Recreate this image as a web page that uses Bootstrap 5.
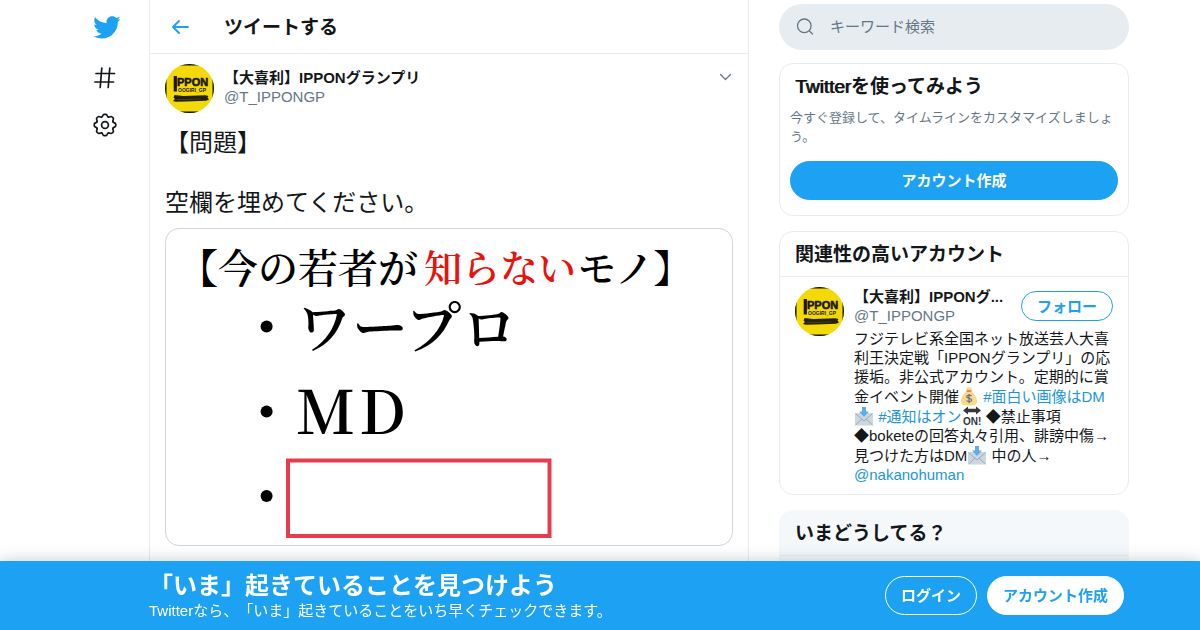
<!DOCTYPE html>
<html lang="ja">
<head>
<meta charset="utf-8">
<meta name="viewport" content="width=device-width, initial-scale=1">
<title>ツイートする</title>
<link rel="stylesheet" href="https://cdn.jsdelivr.net/npm/bootstrap@5.3.0/dist/css/bootstrap.min.css">
<style>
:root { --tw-blue: #1da1f2; --tw-link: #1b95e0; --tw-grey: #657786; --tw-line: #e6ecf0; }
body { font-family: "Liberation Sans", "Noto Sans CJK JP", sans-serif; font-size: 15px; line-height: 19px; color: #14171a; background: #fff; text-spacing-trim: space-all; font-feature-settings: "chws" 0; }
.shell { max-width: 1058px; }
.side-nav { width: 78px; padding-left: 10px; }
.side-nav a { width: 48px; height: 47px; color: #14171a; }
.side-nav a:first-child { height: 54px; padding-left: 2px; color: var(--tw-blue); }
.feed { max-width: 600px; border: solid var(--tw-line); border-width: 0 1px; }
.feed-top { height: 54px; padding: 0 20px; border-bottom: 1px solid var(--tw-line); }
.feed-top h1 { font-size: 19px; line-height: 24px; margin-left: 32px; padding-top: 2px; }
.feed-top a { color: var(--tw-blue); width: 22px; }
.tweet { padding: 10px 15px 15px; }
.avatar { width: 49px; height: 49px; flex: none; border-radius: 50%; margin-right: 10px; }
.handle { color: var(--tw-grey); }
.who { padding-top: 4px; }
.tweet-text { font-size: 24px; line-height: 30px; margin: 15px 0 10px; }
.photo { border: 1px solid #ccd6dd; border-radius: 14px; overflow: hidden; }
.aside { width: 350px; margin-left: 30px; padding-top: 4px; flex: none; }
.search { background: #e6ecf0; height: 46px; padding: 0 15px; color: var(--tw-grey); margin-bottom: 13px; }
.search input { background: none; border: 0; outline: 0; padding: 0 0 2px; margin-left: 14px; color: inherit; }
.search input::placeholder { color: var(--tw-grey); opacity: 1; }
.panel { border: 1px solid var(--tw-line); border-radius: 14px; margin-bottom: 15px; }
.panel h2 { font-size: 19px; line-height: 24px; margin: 0; padding: 11px 15px 9px; }
.thin-latin { font-weight: 400; text-shadow: 1px 0 currentColor; }
.signup { padding: 0 10px 15px; }
.hint { font-size: 13px; color: var(--tw-grey); margin-bottom: 15px; }
.pill { border-radius: 99px; font-size: 15px; font-weight: 700; line-height: 19px; height: 39px; padding: 0 15px; border: 1px solid var(--tw-blue); }
.pill-fill { background: var(--tw-blue); color: #fff; }
.pill-line { background: #fff; color: var(--tw-blue); height: 30px; }
.pill-ghost { background: transparent; color: #fff; border-color: #fff; margin-right: 10px; }
.pill-white { background: #fff; color: var(--tw-blue); border-color: #fff; }
.account { border-top: 1px solid var(--tw-line); padding: 10px 15px; }
.account-text { min-width: 0; }
.bio { margin-top: 4px; }
.bio a { color: var(--tw-link); }
.emoji { width: 18px; height: 20px; margin: 0 1px; vertical-align: -4px; }
.trend { background: #f5f8fa; border-color: #f5f8fa; }
.trend div { border-top: 1px solid var(--tw-line); height: 30px; }
.promo { background: var(--tw-blue); color: #fff; box-shadow: 0 0 15px rgba(20,50,70,.25); }
.promo .shell { padding: 10px 5px 10px 78px; }
.promo strong { font-size: 24px; line-height: 30px; }
</style>
</head>
<body>
<svg class="d-none" aria-hidden="true">
  <defs>
    <symbol id="ippon" viewBox="0 0 49 49">
        <rect width="49" height="49" fill="#f4d908"/>
        <path d="M0 14h1.500v20H0zM49 14h-1.500v20H49zM15 0h19v1.400H15zM15 49h19v-1.400H15z" fill="#111"/>
        <rect x="8.700" y="12" width="3.200" height="15.500" fill="#1a1705"/>
        <text x="12" y="22" font-family="Liberation Sans, sans-serif" font-weight="700" font-size="11" fill="#1a1705" stroke="#1a1705" stroke-width=".6">PPON</text>
        <text x="13" y="27.500" font-family="Liberation Sans, sans-serif" font-weight="700" font-size="5" fill="#1a1705">OOGIRI_GP</text>
        <path d="M9.500 31l9 1 22-.8 3 .8-1 1.500 1.500 2-3 1.200-20 .7-10 .3-3-.8 2-2.200-1.500-1z" fill="#242010"/>
        <path d="M12 35.500h8l16-.6" stroke="#6b600c" stroke-width=".5" fill="none"/>
    </symbol>
    <path id="tooth" d="M-3.300-7.950C-1.900-8.400-2.300-10.700-1-10.700H1C2.300-10.700 1.900-8.400 3.300-7.950"/>
    <symbol id="inbox" viewBox="0 0 18 20">
      <rect y="7" width="18" height="12.500" rx="1.500" fill="#ccd6dd"/>
      <path d="M.5 19l6.500-6M17.500 19L11 13M.5 7.500L9 15l8.500-7.500" fill="none" stroke="#99aab5" stroke-width="1"/>
      <path d="M7 1h4v4.500h3L9 11 4 5.500h3z" fill="#5dadec"/>
    </symbol>
  </defs>
</svg>

<div class="shell mx-auto d-flex min-vh-100">
  <nav class="side-nav flex-shrink-0">
    <a href="#" class="d-flex align-items-center justify-content-center" aria-label="Twitter">
      <svg width="29" height="29" viewBox="0 0 24 24" fill="currentColor"><path d="M23.643 4.937c-.835.37-1.732.62-2.675.733.962-.576 1.700-1.490 2.048-2.578-.9.534-1.897.922-2.958 1.130-.85-.904-2.060-1.470-3.400-1.470-2.572 0-4.658 2.086-4.658 4.660 0 .364.042.718.12 1.060-3.873-.195-7.304-2.050-9.602-4.868-.4.690-.63 1.490-.63 2.342 0 1.616.823 3.043 2.072 3.878-.764-.025-1.482-.234-2.110-.583v.06c0 2.257 1.605 4.140 3.737 4.568-.392.106-.803.162-1.227.162-.3 0-.593-.028-.877-.082.593 1.850 2.313 3.198 4.352 3.234-1.595 1.250-3.604 1.995-5.786 1.995-.376 0-.747-.022-1.112-.065 2.062 1.323 4.510 2.093 7.140 2.093 8.570 0 13.255-7.098 13.255-13.254 0-.2-.005-.402-.014-.602.910-.658 1.700-1.477 2.323-2.410z"/></svg>
    </a>
    <a href="#" class="d-flex align-items-center justify-content-center" aria-label="話題を検索">
      <svg width="24" height="24" viewBox="0 0 24 24" fill="none" stroke="currentColor" stroke-width="1.700" stroke-linecap="round"><path d="M3 7.500h18.500M2 16h18.500M8.800 2L7.200 21.500M16.800 2l-1.600 19.500"/></svg>
    </a>
    <a href="#" class="d-flex align-items-center justify-content-center" aria-label="設定">
      <svg width="24" height="24" viewBox="-12 -12 24 24" fill="none" stroke="currentColor" stroke-width="1.700" stroke-linecap="round"><circle r="3.400"/><use href="#tooth"/><use href="#tooth" transform="rotate(45)"/><use href="#tooth" transform="rotate(90)"/><use href="#tooth" transform="rotate(135)"/><use href="#tooth" transform="rotate(180)"/><use href="#tooth" transform="rotate(225)"/><use href="#tooth" transform="rotate(270)"/><use href="#tooth" transform="rotate(315)"/></svg>
    </a>
  </nav>

  <main class="feed flex-grow-1">
    <header class="feed-top d-flex align-items-center">
      <a href="#" class="d-flex" aria-label="戻る"><svg width="22" height="22" viewBox="0 0 22 22" fill="none" stroke="currentColor" stroke-width="1.900" stroke-linecap="round" stroke-linejoin="round"><path d="M18 11H3.500M9 5l-6 6 6 6"/></svg></a>
      <h1 class="fw-bold mb-0">ツイートする</h1>
    </header>
    <article class="tweet">
      <div class="d-flex">
        <svg class="avatar"><use href="#ippon"/></svg>
        <div class="who flex-grow-1">
          <div class="fw-bold">【大喜利】IPPONグランプリ</div>
          <div class="handle">@T_IPPONGP</div>
        </div>
        <button class="btn p-0 border-0 align-self-start mt-1" aria-label="その他"><svg class="d-block" width="15" height="18" viewBox="0 0 15 18" fill="none" stroke="#657786" stroke-width="1.300" stroke-linecap="round" stroke-linejoin="round"><path d="M2.500 6.500l5 5 5-5"/></svg></button>
      </div>
      <p class="tweet-text">【問題】<br><br>空欄を埋めてください。</p>
      <div class="photo">
        <svg class="d-block w-100" viewBox="0 0 566 316" font-family="'Noto Serif CJK JP', 'Liberation Serif', 'Noto Sans CJK JP', serif" font-size="40" font-weight="600">
          <text x="12" y="54">【今の若者が</text>
          <text x="258" y="53" font-size="38" fill="#e8120f">知らない</text>
          <text x="412" y="53" font-size="38">モノ】</text>
          <text x="130" y="119" font-size="56">ワープロ</text>
          <g font-size="60"><text x="130" y="205">M</text><text x="193" y="205">D</text></g>
          <circle cx="100.600" cy="97.500" r="6"/><circle cx="100.600" cy="182.500" r="6"/><circle cx="100.600" cy="267" r="6"/>
          <rect x="122" y="231.500" width="261.500" height="75.500" fill="none" stroke="#e63c50" stroke-width="4"/>
        </svg>
      </div>
    </article>
  </main>

  <aside class="aside">
    <form class="search rounded-pill d-flex align-items-center">
      <svg width="22" height="22" viewBox="0 0 22 22" fill="none" stroke="currentColor" stroke-width="1.300" stroke-linecap="round"><circle cx="10.300" cy="9.800" r="6.800"/><path d="M15.500 15l3 3"/></svg>
      <input class="flex-grow-1" type="search" aria-label="キーワード検索" placeholder="キーワード検索">
    </form>
    <section class="panel">
      <h2 class="fw-bold"><span class="thin-latin">Twitter</span>を使ってみよう</h2>
      <div class="signup">
        <p class="hint">今すぐ登録して、タイムラインをカスタマイズしましょう。</p>
        <button class="pill pill-fill w-100">アカウント作成</button>
      </div>
    </section>
    <section class="panel">
      <h2 class="fw-bold">関連性の高いアカウント</h2>
      <div class="account d-flex">
        <svg class="avatar"><use href="#ippon"/></svg>
        <div class="account-text flex-grow-1">
          <div class="d-flex align-items-center">
            <div class="flex-grow-1">
              <div class="fw-bold">【大喜利】IPPONグ...</div>
              <div class="handle">@T_IPPONGP</div>
            </div>
            <button class="pill pill-line">フォロー</button>
          </div>
          <div class="bio">フジテレビ系全国ネット放送芸人大喜利王決定戦「IPPONグランプリ」の応援垢。非公式アカウント。定期的に賞金イベント開催<svg class="emoji" viewBox="0 0 18 20" role="img" aria-label="お金"><path d="M6 1l1.500 1L9 .8l1.500 1.200L12 1l-.8 4C14 7 17.500 12 17 16c-.4 3-3 3.500-8 3.500S1.400 19 1 16C.5 12 4 7 6.800 5z" fill="#fdd888"/><path d="M6.500 5h5" stroke="#bf6952" stroke-width="1.300"/><path d="M11.500 10c-1-1.300-4.800-1.300-4.800.7 0 2.200 5 1.100 5 3.400 0 2-4 2.100-5.200.4M9 8v9.300" fill="none" stroke="#67757f" stroke-width="1.300"/></svg> <a href="#" class="text-decoration-none">#面白い画像はDM</a><br><svg class="emoji" role="img" aria-label="受信"><use href="#inbox"/></svg> <a href="#" class="text-decoration-none">#通知はオン</a><svg class="emoji" viewBox="0 0 18 20" role="img" aria-label="ON"><path d="M0 4.500L5 .5v2.300h8V.5l5 4-5 4V6.200H5v2.300z" fill="#31373d"/><text x="0" y="19" font-size="10" font-weight="700" fill="#31373d">ON!</text></svg> ◆禁止事項<br>◆boketeの回答丸々引用、誹謗中傷→<br>見つけた方はDM<svg class="emoji" role="img" aria-label="受信"><use href="#inbox"/></svg> 中の人→<br><a href="#" class="text-decoration-none">@nakanohuman</a></div>
        </div>
      </div>
    </section>
    <section class="panel trend mb-0">
      <h2 class="fw-bold">いまどうしてる？</h2>
      <div></div>
    </section>
  </aside>
</div>

<footer class="promo fixed-bottom">
  <div class="shell mx-auto d-flex align-items-center">
    <div class="flex-grow-1">
      <strong class="d-block">「いま」起きていることを見つけよう</strong>
      <div>Twitterなら、「いま」起きていることをいち早くチェックできます。</div>
    </div>
    <button class="pill pill-ghost">ログイン</button>
    <button class="pill pill-white">アカウント作成</button>
  </div>
</footer>
<script src="https://cdn.jsdelivr.net/npm/bootstrap@5.3.0/dist/js/bootstrap.bundle.min.js"></script>
</body>
</html>
